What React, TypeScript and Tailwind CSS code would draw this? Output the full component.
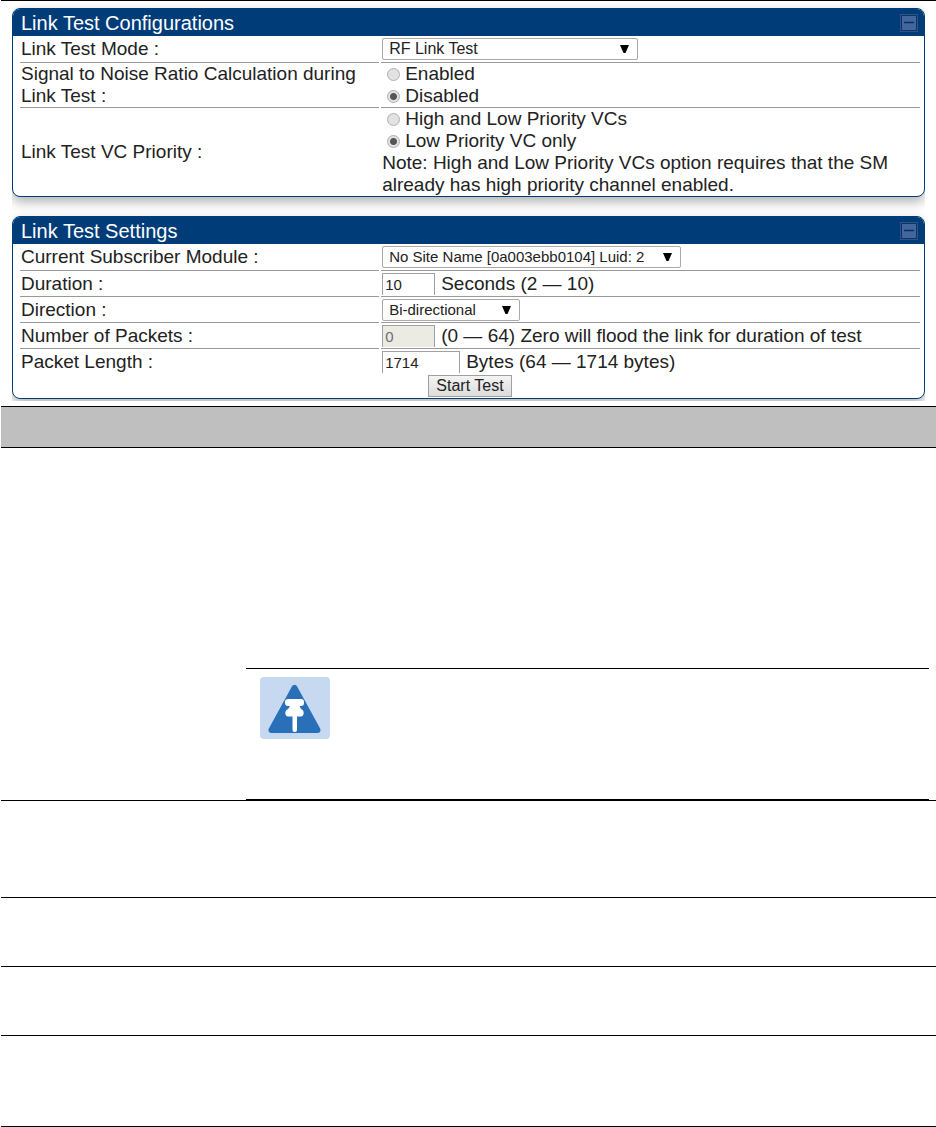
import type React from "react";
import { useState } from "react";

type PanelProps = {
  title: string;
  children: React.ReactNode;
};

function Panel({ title, children }: PanelProps) {
  const [open, setOpen] = useState(true);

  return (
    <section className="overflow-hidden rounded-lg border border-[#003c78] bg-white shadow-[0_5px_12px_rgba(0,0,0,0.3)]">
      <header className="flex h-[27px] items-center justify-between bg-[#003c78] pl-2 pr-[6px]">
        <h2 className="text-[20px] leading-[26px] text-white">{title}</h2>
        <button
          type="button"
          aria-label={`Toggle ${title}`}
          aria-expanded={open}
          onClick={() => setOpen(!open)}
          className="size-[18px]"
        >
          <svg viewBox="0 0 18 18" className="size-[18px]">
            <rect width="18" height="18" fill="#2a548c" />
            <rect x="1.5" y="1.5" width="15" height="15" fill="#42679f" stroke="#123261" />
            <path d={open ? "M4 8.5h10" : "M4 8.5h10M9 4v10"} stroke="#0c2c5c" strokeWidth="1.5" />
          </svg>
        </button>
      </header>
      {open && <div className="pl-[7px] pr-1">{children}</div>}
    </section>
  );
}

type RowProps = {
  label: React.ReactNode;
  htmlFor?: string;
  last?: boolean;
  children: React.ReactNode;
};

function Row({ label, htmlFor, last, children }: RowProps) {
  const rule = last ? "" : "border-b border-[#999]";

  return (
    <div className="grid min-h-[26px] grid-cols-[2fr_3fr] gap-x-[2px]">
      <div className={`flex items-center pl-px ${rule}`}>
        {htmlFor ? <label htmlFor={htmlFor}>{label}</label> : <span>{label}</span>}
      </div>
      <div className={`flex flex-col justify-center pl-px ${rule}`}>{children}</div>
    </div>
  );
}

type SelectProps = {
  id: string;
  className: string;
  options: string[];
};

function Select({ id, className, options }: SelectProps) {
  return (
    <div className={`relative ${className}`}>
      <select
        id={id}
        className="block h-[22px] w-full appearance-none rounded-[2px] border border-[#a9a9a9] bg-white pl-[6px] leading-5"
      >
        {options.map((option) => (
          <option key={option}>{option}</option>
        ))}
      </select>
      <svg viewBox="0 0 9 8" className="pointer-events-none absolute right-[9px] top-[7px] h-2 w-[9px]">
        <path d="M0 0h9L5.500 8h-2z" fill="#000" />
      </svg>
    </div>
  );
}

type RadioProps = {
  name: string;
  label: string;
  checked: boolean;
  onChange: () => void;
};

function Radio({ name, label, checked, onChange }: RadioProps) {
  return (
    <label className="flex items-center gap-[5px] pl-[5px]">
      <input
        type="radio"
        name={name}
        checked={checked}
        onChange={onChange}
        className="size-[13px] appearance-none rounded-full border border-[#b0b0b0] bg-[#e2e2e2] checked:bg-[radial-gradient(circle,#555_0_3px,#e2e2e2_4px)]"
      />
      {label}
    </label>
  );
}

const inputClass =
  "h-[22px] border-x border-t border-[#a0a0a0] bg-white pl-[2px] text-[15px] leading-5 text-[#222] disabled:bg-[#ebebe4] disabled:text-[#6d6d6d]";

function NoteIcon() {
  return (
    <svg viewBox="0 0 70 62" className="h-[62px] w-[70px]" role="img" aria-label="Note">
      <rect width="70" height="62" rx="4" fill="#c6d9f0" />
      <path
        d="M34.5 11 L11.5 53 H57.5 Z"
        fill="#2a70b8"
        stroke="#2a70b8"
        strokeWidth="6"
        strokeLinejoin="round"
      />
      <rect x="25" y="22" width="19" height="7" rx="3" fill="#fff" />
      <path
        d="M30 28h9.500c.5 3 1.500 4 3 5 2 1.500 1.500 6.500-1.500 6.500H28c-3 0-3.500-5-1.500-6.500 1.800-1 3-2 3.500-5z"
        fill="#fff"
      />
      <rect x="32.500" y="38" width="4.500" height="17" rx="2" fill="#fff" />
    </svg>
  );
}

export default function App() {
  const [snr, setSnr] = useState("Disabled");
  const [priority, setPriority] = useState("Low Priority VC only");

  return (
    <main className="bg-white pl-px font-['Liberation_Sans',Arial,sans-serif] text-[19px] leading-[22px] text-[#222]">
      <div className="border-t border-black px-[11px] pt-[2px]">
        <form
          onSubmit={(e) => e.preventDefault()}
          className="flex flex-col gap-[19px] overflow-hidden pb-[2px] pt-[5px]"
        >
          <Panel title="Link Test Configurations">
            <Row label="Link Test Mode :" htmlFor="mode">
              <div className="py-[2px]">
                <Select
                  id="mode"
                  className="w-64 text-[16px]"
                  options={["RF Link Test", "Link Test with Bridging"]}
                />
              </div>
            </Row>
            <Row label="Signal to Noise Ratio Calculation during Link Test :">
              {["Enabled", "Disabled"].map((value) => (
                <Radio
                  key={value}
                  name="snr"
                  label={value}
                  checked={snr === value}
                  onChange={() => setSnr(value)}
                />
              ))}
            </Row>
            <Row label="Link Test VC Priority :" last>
              {["High and Low Priority VCs", "Low Priority VC only"].map((value) => (
                <Radio
                  key={value}
                  name="priority"
                  label={value}
                  checked={priority === value}
                  onChange={() => setPriority(value)}
                />
              ))}
              <p>
                Note: High and Low Priority VCs option requires that the SM already has high
                priority channel enabled.
              </p>
            </Row>
          </Panel>

          <Panel title="Link Test Settings">
            <Row label="Current Subscriber Module :" htmlFor="module">
              <div className="py-[2px]">
                <Select
                  id="module"
                  className="w-[299px] text-[15px]"
                  options={["No Site Name [0a003ebb0104] Luid: 2"]}
                />
              </div>
            </Row>
            <Row label="Duration :" htmlFor="duration">
              <div className="flex gap-[6px]">
                <input id="duration" defaultValue="10" className={`w-[53px] ${inputClass}`} />
                Seconds (2 — 10)
              </div>
            </Row>
            <Row label="Direction :" htmlFor="direction">
              <Select
                id="direction"
                className="w-[138px] text-[15px]"
                options={["Bi-directional", "Uplink Only", "Downlink Only"]}
              />
            </Row>
            <Row label="Number of Packets :" htmlFor="packets">
              <div className="flex gap-[6px]">
                <input id="packets" defaultValue="0" disabled className={`w-[53px] ${inputClass}`} />
                (0 — 64) Zero will flood the link for duration of test
              </div>
            </Row>
            <Row label="Packet Length :" htmlFor="length" last>
              <div className="flex gap-[6px]">
                <input id="length" defaultValue="1714" className={`w-[78px] ${inputClass}`} />
                Bytes (64 — 1714 bytes)
              </div>
            </Row>
            <div className="flex h-[23px] justify-center">
              <button
                type="submit"
                className="h-[22px] w-[84px] border border-[#a0a0a0] bg-linear-to-b from-[#f4f4f4] to-[#dcdcdc] text-[16px] leading-5"
              >
                Start Test
              </button>
            </div>
          </Panel>
        </form>
      </div>

      {/* attribute table: heading band, then blank attribute / meaning rows */}
      <div className="mt-[5px] h-[42px] border-y border-black bg-[#bfbfbf]" />
      <div className="border-b border-black pl-[245px] pr-[7px] pt-[220px]">
        <div className="h-[132px] border-y border-black pl-[14px] pt-2">
          <NoteIcon />
        </div>
      </div>
      <div className="h-[97px] border-b border-black" />
      <div className="h-[69px] border-b border-black" />
      <div className="h-[69px] border-b border-black" />
      <div className="h-[91px] border-b border-black" />
    </main>
  );
}
